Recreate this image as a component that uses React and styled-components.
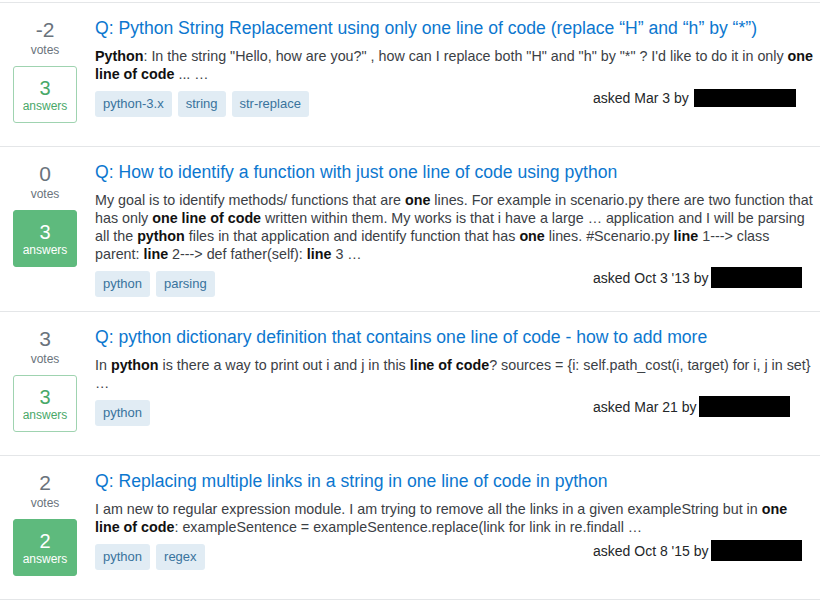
import React from "react";
import styled, { createGlobalStyle } from "styled-components";

const GlobalStyle = createGlobalStyle`
  body {
    margin: 0;
    background: #fff;
    font-family: "Liberation Sans", Arial, sans-serif;
  }
`;

const questions = [
  {
    votes: -2,
    answers: 3,
    accepted: false,
    title: "Q: Python String Replacement using only one line of code (replace \u201cH\u201d and \u201ch\u201d by \u201c*\u201d)",
    excerpt: [
      ["b", "Python"],
      ": In the string \"Hello, how are you?\" , how can I replace both \"H\" and \"h\" by \"*\" ? I'd like to do it in only ",
      ["b", "one line of code"],
      " ... \u2026",
    ],
    tags: ["python-3.x", "string", "str-replace"],
    asked: "asked Mar 3 by",
    redacted: { w: 102, h: 18, gap: 5 },
  },
  {
    votes: 0,
    answers: 3,
    accepted: true,
    title: "Q: How to identify a function with just one line of code using python",
    excerpt: [
      "My goal is to identify methods/ functions that are ",
      ["b", "one"],
      " lines. For example in scenario.py there are two function that has only ",
      ["b", "one line of code"],
      " written within them. My works is that i have a large \u2026 application and I will be parsing all the ",
      ["b", "python"],
      " files in that application and identify function that has ",
      ["b", "one"],
      " lines. #Scenario.py ",
      ["b", "line"],
      " 1---> class parent: ",
      ["b", "line"],
      " 2---> def father(self): ",
      ["b", "line"],
      " 3 \u2026",
    ],
    tags: ["python", "parsing"],
    asked: "asked Oct 3 '13 by",
    redacted: { w: 91, h: 21, gap: 2 },
  },
  {
    votes: 3,
    answers: 3,
    accepted: false,
    title: "Q: python dictionary definition that contains one line of code - how to add more",
    excerpt: [
      "In ",
      ["b", "python"],
      " is there a way to print out i and j in this ",
      ["b", "line of code"],
      "? sources = {i: self.path_cost(i, target) for i, j in set} \u2026",
    ],
    tags: ["python"],
    asked: "asked Mar 21 by",
    redacted: { w: 91, h: 21, gap: 2 },
  },
  {
    votes: 2,
    answers: 2,
    accepted: true,
    title: "Q: Replacing multiple links in a string in one line of code in python",
    excerpt: [
      "I am new to regular expression module. I am trying to remove all the links in a given exampleString but in ",
      ["b", "one line of code"],
      ": exampleSentence = exampleSentence.replace(link for link in re.findall \u2026",
    ],
    tags: ["python", "regex"],
    asked: "asked Oct 8 '15 by",
    redacted: { w: 91, h: 21, gap: 2 },
  },
];

const List = styled.div`
  width: 820px;
  margin-top: 2px;
  border-top: 1px solid #e4e6e8;
`;

const Item = styled.div`
  display: flex;
  padding: 14px 0 14px;
  border-bottom: 1px solid #e4e6e8;
`;

const Stats = styled.div`
  width: 90px;
  flex-shrink: 0;
  display: flex;
  flex-direction: column;
  align-items: center;
  padding-bottom: 9px;
`;

const VoteCount = styled.div`
  font-size: 21px;
  line-height: 24px;
  margin-top: 1px;
  color: #6a737c;
`;

const VoteLabel = styled.div`
  font-size: 12px;
  line-height: 15px;
  margin-top: 1px;
  color: #6a737c;
`;

const AnswerBox = styled.div`
  box-sizing: border-box;
  width: 64px;
  height: 57px;
  margin-top: 8px;
  padding: 10px 0 8px;
  border-radius: 3px;
  text-align: center;
  border: 1px solid ${(p) => (p.$accepted ? "#5eba7d" : "#9fd3b0")};
  background: ${(p) => (p.$accepted ? "#5eba7d" : "transparent")};
  color: ${(p) => (p.$accepted ? "#fff" : "#48a868")};
`;

const AnswerCount = styled.div`
  font-size: 20px;
  line-height: 22px;
`;

const AnswerLabel = styled.div`
  font-size: 12px;
  line-height: 15px;
`;

const Content = styled.div`
  flex: 1;
  min-width: 0;
  padding: 0 5px 0 5px;
`;

const Title = styled.a`
  display: block;
  font-size: 17.6px;
  line-height: 22px;
  color: #0c77cf;
  text-decoration: none;
  margin-bottom: 8px;
  cursor: pointer;
`;

const Excerpt = styled.div`
  font-size: 14.3px;
  line-height: 18px;
  color: #3b4045;

  b {
    color: #111;
    font-weight: 700;
  }
`;

const Footer = styled.div`
  display: flex;
  justify-content: space-between;
  align-items: flex-start;
  margin-top: 6px;
`;

const Tags = styled.div`
  display: flex;
  gap: 6px;
  margin-top: 2px;
`;

const Tag = styled.a`
  display: inline-block;
  padding: 4px 8px;
  font-size: 13px;
  line-height: 18px;
  color: #39739d;
  background: #e1ecf4;
  border-radius: 3px;
  cursor: pointer;
`;

const Meta = styled.div`
  width: 222px;
  flex-shrink: 0;
  display: flex;
  align-items: center;
  margin-top: ${(p) => (p.$h > 19 ? "-2px" : "0")};
  font-size: 14px;
  line-height: 18px;
  color: #242729;
`;

const Redacted = styled.span`
  display: inline-block;
  width: ${(p) => p.$w}px;
  height: ${(p) => p.$h}px;
  margin-left: ${(p) => p.$gap}px;
  background: #000;
`;

const renderExcerpt = (parts) =>
  parts.map((part, i) =>
    Array.isArray(part) ? <b key={i}>{part[1]}</b> : <React.Fragment key={i}>{part}</React.Fragment>
  );

const Question = ({ q }) => (
  <Item>
    <Stats>
      <VoteCount>{q.votes}</VoteCount>
      <VoteLabel>votes</VoteLabel>
      <AnswerBox $accepted={q.accepted}>
        <AnswerCount>{q.answers}</AnswerCount>
        <AnswerLabel>answers</AnswerLabel>
      </AnswerBox>
    </Stats>
    <Content>
      <Title>{q.title}</Title>
      <Excerpt>{renderExcerpt(q.excerpt)}</Excerpt>
      <Footer>
        <Tags>
          {q.tags.map((t) => (
            <Tag key={t}>{t}</Tag>
          ))}
        </Tags>
        <Meta $h={q.redacted.h}>
          {q.asked}
          <Redacted $w={q.redacted.w} $h={q.redacted.h} $gap={q.redacted.gap} />
        </Meta>
      </Footer>
    </Content>
  </Item>
);

export default function App() {
  return (
    <>
      <GlobalStyle />
      <List>
        {questions.map((q, i) => (
          <Question key={i} q={q} />
        ))}
      </List>
    </>
  );
}
